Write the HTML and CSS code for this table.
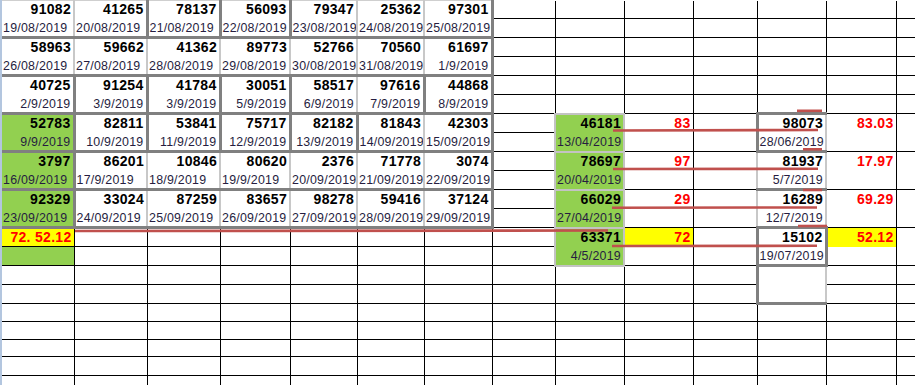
FILE: index.html
```html
<!DOCTYPE html>
<html>
<head>
<meta charset="utf-8">
<link rel="stylesheet" href="styles.css">
</head>
<body>
<div class="sheet">
<table class="grid">
<colgroup>
<col class="cA"><col class="cB"><col class="cC"><col class="cD"><col class="cE"><col class="cF"><col class="cG"><col class="cH"><col class="cI"><col class="cJ"><col class="cK"><col class="cL"><col class="cM"><col class="cN">
</colgroup>
<tr class="r1">
<td class="d a" rowspan="2"><span class="n">91082</span><span class="t tl">19/08/2019</span></td>
<td class="d" rowspan="2"><span class="n">41265</span><span class="t tl">20/08/2019</span></td>
<td class="d k" rowspan="2"><span class="n">78137</span><span class="t tl">21/08/2019</span></td>
<td class="d k" rowspan="2"><span class="n">56093</span><span class="t tl">22/08/2019</span></td>
<td class="d k" rowspan="2"><span class="n">79347</span><span class="t tl">23/08/2019</span></td>
<td class="d" rowspan="2"><span class="n">25362</span><span class="t tl">24/08/2019</span></td>
<td class="d e" rowspan="2"><span class="n">97301</span><span class="t tl">25/08/2019</span></td>
<td></td><td></td><td></td><td></td><td></td><td></td><td></td>
</tr>
<tr><td></td><td></td><td></td><td></td><td></td><td></td><td></td></tr>
<tr>
<td class="d a" rowspan="2"><span class="n">58963</span><span class="t tl">26/08/2019</span></td>
<td class="d" rowspan="2"><span class="n">59662</span><span class="t tl">27/08/2019</span></td>
<td class="d" rowspan="2"><span class="n">41362</span><span class="t tl">28/08/2019</span></td>
<td class="d" rowspan="2"><span class="n">89773</span><span class="t tl">29/08/2019</span></td>
<td class="d" rowspan="2"><span class="n">52766</span><span class="t tl">30/08/2019</span></td>
<td class="d" rowspan="2"><span class="n">70560</span><span class="t tl">31/08/2019</span></td>
<td class="d e" rowspan="2"><span class="n">61697</span><span class="t">1/9/2019</span></td>
<td></td><td></td><td></td><td></td><td></td><td></td><td></td>
</tr>
<tr><td></td><td></td><td></td><td></td><td></td><td></td><td></td></tr>
<tr>
<td class="d a" rowspan="2"><span class="n">40725</span><span class="t">2/9/2019</span></td>
<td class="d k" rowspan="2"><span class="n">91254</span><span class="t">3/9/2019</span></td>
<td class="d k" rowspan="2"><span class="n">41784</span><span class="t">3/9/2019</span></td>
<td class="d k" rowspan="2"><span class="n">30051</span><span class="t">5/9/2019</span></td>
<td class="d k" rowspan="2"><span class="n">58517</span><span class="t">6/9/2019</span></td>
<td class="d" rowspan="2"><span class="n">97616</span><span class="t">7/9/2019</span></td>
<td class="d k e" rowspan="2"><span class="n">44868</span><span class="t">8/9/2019</span></td>
<td></td><td></td><td></td><td></td><td></td><td></td><td></td>
</tr>
<tr><td></td><td></td><td></td><td></td><td></td><td></td><td></td></tr>
<tr>
<td class="d a gr" rowspan="2"><span class="n">52783</span><span class="t">9/9/2019</span></td>
<td class="d k" rowspan="2"><span class="n">82811</span><span class="t">10/9/2019</span></td>
<td class="d k" rowspan="2"><span class="n">53841</span><span class="t">11/9/2019</span></td>
<td class="d k" rowspan="2"><span class="n">75717</span><span class="t">12/9/2019</span></td>
<td class="d k" rowspan="2"><span class="n">82182</span><span class="t">13/9/2019</span></td>
<td class="d k" rowspan="2"><span class="n">81843</span><span class="t tl">14/09/2019</span></td>
<td class="d e" rowspan="2"><span class="n">42303</span><span class="t tl">15/09/2019</span></td>
<td></td>
<td class="g" rowspan="2"><span class="n">46181</span><span class="t tl">13/04/2019</span></td>
<td class="rd o">83</td>
<td class="o"></td>
<td class="b k" rowspan="2"><span class="n">98073</span><span class="t tl">28/06/2019</span></td>
<td class="rd o">83.03</td>
<td class="o"></td>
</tr>
<tr><td></td><td></td><td></td><td></td><td></td></tr>
<tr>
<td class="d a gr" rowspan="2"><span class="n">3797</span><span class="t tl">16/09/2019</span></td>
<td class="d k" rowspan="2"><span class="n">86201</span><span class="t tl">17/9/2019</span></td>
<td class="d" rowspan="2"><span class="n">10846</span><span class="t tl">18/9/2019</span></td>
<td class="d" rowspan="2"><span class="n">80620</span><span class="t tl">19/9/2019</span></td>
<td class="d" rowspan="2"><span class="n">2376</span><span class="t tl">20/09/2019</span></td>
<td class="d" rowspan="2"><span class="n">71778</span><span class="t tl">21/09/2019</span></td>
<td class="d e" rowspan="2"><span class="n">3074</span><span class="t tl">22/09/2019</span></td>
<td></td>
<td class="g" rowspan="2"><span class="n">78697</span><span class="t tl">20/04/2019</span></td>
<td class="rd o">97</td>
<td class="o"></td>
<td class="b" rowspan="2"><span class="n">81937</span><span class="t">5/7/2019</span></td>
<td class="rd o">17.97</td>
<td class="o"></td>
</tr>
<tr><td></td><td></td><td></td><td></td><td></td></tr>
<tr>
<td class="d a gr" rowspan="2"><span class="n">92329</span><span class="t tl">23/09/2019</span></td>
<td class="d k" rowspan="2"><span class="n">33024</span><span class="t tl">24/09/2019</span></td>
<td class="d" rowspan="2"><span class="n">87259</span><span class="t tl">25/09/2019</span></td>
<td class="d" rowspan="2"><span class="n">83657</span><span class="t tl">26/09/2019</span></td>
<td class="d" rowspan="2"><span class="n">98278</span><span class="t tl">27/09/2019</span></td>
<td class="d" rowspan="2"><span class="n">59416</span><span class="t tl">28/09/2019</span></td>
<td class="d e" rowspan="2"><span class="n">37124</span><span class="t tl">29/09/2019</span></td>
<td></td>
<td class="g" rowspan="2"><span class="n">66029</span><span class="t tl">27/04/2019</span></td>
<td class="rd o">29</td>
<td class="o"></td>
<td class="b" rowspan="2"><span class="n">16289</span><span class="t">12/7/2019</span></td>
<td class="rd o">69.29</td>
<td class="o"></td>
</tr>
<tr><td></td><td></td><td></td><td></td><td></td></tr>
<tr>
<td class="a y rd p0">72. 52.12</td>
<td></td><td></td><td></td><td></td><td></td><td></td><td></td>
<td class="g" rowspan="2"><span class="n">63371</span><span class="t">4/5/2019</span></td>
<td class="y rd o">72</td>
<td class="o"></td>
<td class="b k kr" rowspan="2"><span class="n">15102</span><span class="t tl">19/07/2019</span></td>
<td class="y rd o">52.12</td>
<td class="o"></td>
</tr>
<tr>
<td class="a gr"></td>
<td></td><td></td><td></td><td></td><td></td><td></td><td></td>
<td></td><td></td><td></td><td></td>
</tr>
<tr>
<td class="a"></td><td></td><td></td><td></td><td></td><td></td><td></td><td></td><td></td><td></td><td></td>
<td class="b k" rowspan="2"></td>
<td></td><td></td>
</tr>
<tr><td class="a"></td><td></td><td></td><td></td><td></td><td></td><td></td><td></td><td></td><td></td><td></td><td></td><td></td></tr>
<tr class="h18"><td class="a"></td><td></td><td></td><td></td><td></td><td></td><td></td><td></td><td></td><td></td><td></td><td></td><td></td><td></td></tr>
<tr class="h18"><td class="a"></td><td></td><td></td><td></td><td></td><td></td><td></td><td></td><td></td><td></td><td></td><td></td><td></td><td></td></tr>
<tr class="h17"><td class="a"></td><td></td><td></td><td></td><td></td><td></td><td></td><td></td><td></td><td></td><td></td><td></td><td></td><td></td></tr>
<tr><td class="a"></td><td></td><td></td><td></td><td></td><td></td><td></td><td></td><td></td><td></td><td></td><td></td><td></td><td></td></tr>
<tr><td class="a"></td><td></td><td></td><td></td><td></td><td></td><td></td><td></td><td></td><td></td><td></td><td></td><td></td><td></td></tr>
</table>
<svg class="links" width="915" height="385" viewBox="0 0 915 385" aria-hidden="true">
<g stroke="#c0504d" stroke-width="2.6" fill="none">
<line x1="75" y1="231" x2="608" y2="230.5"/>
<line x1="613" y1="130.5" x2="818" y2="130"/>
<line x1="797" y1="110.8" x2="822" y2="110.8"/>
<line x1="803" y1="149.3" x2="822" y2="149.3"/>
<line x1="613" y1="169" x2="818" y2="168.8"/>
<line x1="803" y1="190" x2="822" y2="190"/>
<line x1="612" y1="207.7" x2="817" y2="207.5"/>
<line x1="798" y1="226" x2="827" y2="226"/>
<line x1="612" y1="246" x2="817" y2="245.8"/>
</g>
</svg>
</div>
</body>
</html>
```

FILE: styles.css
```css
html, body {
  margin: 0;
  padding: 0;
  background: #fff;
}

body {
  width: 915px;
  height: 385px;
  overflow: hidden;
}

.sheet {
  position: relative;
  height: 385px;
  border-left: 2px solid #b3c6df;
}

.grid {
  border-collapse: collapse;
  table-layout: fixed;
  width: 934px;
  font-family: "Liberation Sans", Arial, sans-serif;
}

.cA { width: 72px; }
.cB { width: 73px; }
.cC { width: 73px; }
.cD { width: 70px; }
.cE { width: 67px; }
.cF { width: 67px; }
.cG { width: 68px; }
.cH { width: 63px; }
.cI { width: 69px; }
.cJ { width: 69px; }
.cK { width: 64px; }
.cL { width: 69px; }
.cM { width: 70px; }
.cN { width: 40px; }

.grid tr { height: 19px; }
.grid tr.r1 { height: 18px; }
.grid tr.h18 { height: 18px; }
.grid tr.h17 { height: 17px; }

.grid td {
  border: 1px solid #000;
  padding: 1px 2px 0 2px;
  vertical-align: top;
  text-align: right;
  font-size: 14px;
  font-weight: bold;
  line-height: 17px;
  letter-spacing: 0.3px;
  white-space: nowrap;
  overflow: hidden;
  color: #000;
}

.grid .r1 td { border-top-style: hidden; }
.grid .r1 td.d { border-top: 1px solid #cfcfcf; }

/* data blocks */
.grid td.d,
.grid td.b {
  padding: 0 2px 0 1px;
  border-top: 3px solid #808080;
  border-bottom: 3px solid #808080;
  border-left: 2px solid #c8c8c8;
  border-right: 2px solid #c8c8c8;
}
.grid td.k { border-left: 3px solid #808080; }
.grid td.kr,
.grid td.e { border-right: 3px solid #808080; }
.grid td.a { border-left-style: hidden; }

.grid td.g {
  padding: 0 2px 0 1px;
  background: #92d050;
  border: 2px solid #c3c3c3;
}

.grid td.gr { background: #92d050; }
.grid td.y { background: #ffff00; }
.grid td.p0 { padding-top: 0; }
.grid td.o { border-bottom-style: hidden; }

.grid td.rd { color: #ff0000; }

.n {
  display: block;
  height: 17px;
  line-height: 17px;
  font-size: 14px;
  font-weight: bold;
  letter-spacing: 0.3px;
  color: #000;
}

.t {
  display: block;
  height: 17px;
  line-height: 20px;
  font-size: 12.4px;
  font-weight: normal;
  letter-spacing: 0.25px;
  color: #261d40;
}

.tl { text-align: left; }

.links {
  position: absolute;
  left: -2px;
  top: 0;
  pointer-events: none;
}
```
